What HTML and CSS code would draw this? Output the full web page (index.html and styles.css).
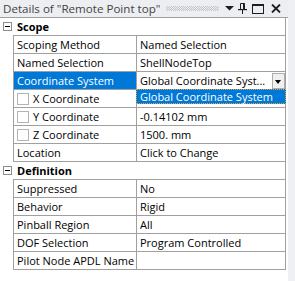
FILE: index.html
```html
<!DOCTYPE html>
<html lang="en">
<head>
    <meta charset="UTF-8">
    <meta name="viewport" content="width=device-width, initial-scale=1.0">
    <title>Details of "Remote Point top"</title>
    <link rel="stylesheet" href="styles.css">
</head>
<body>
<div class="window">
    <div class="pane">
        <!-- Title bar -->
        <div class="title-bar">
            <span class="title">Details of "Remote Point top"</span>
            <span class="grip"></span>
            <svg class="ico ico-menu" width="9" height="5" viewBox="0 0 9 5"><polygon points="0,0 9,0 4.5,4.5" fill="#1e1e1e"/></svg>
            <svg class="ico ico-pin" width="9" height="11" viewBox="0 0 9 11">
                <path d="M2.5 0.5h4v6h-4z" fill="none" stroke="#1e1e1e"/>
                <rect x="5" y="0.5" width="1.5" height="6" fill="#1e1e1e"/>
                <rect x="0" y="6" width="9" height="1.2" fill="#1e1e1e"/>
                <rect x="4" y="7" width="1" height="4" fill="#1e1e1e"/>
            </svg>
            <svg class="ico ico-max" width="12" height="10" viewBox="0 0 12 10">
                <rect x="0.5" y="0.5" width="11" height="9" fill="none" stroke="#1e1e1e"/>
                <rect x="0" y="0" width="12" height="2" fill="#1e1e1e"/>
            </svg>
            <svg class="ico ico-close" width="10" height="9" viewBox="0 0 10 9">
                <path d="M1 0.5l8 8M9 0.5l-8 8" stroke="#1e1e1e" stroke-width="1.8"/>
            </svg>
        </div>

        <!-- Property grid -->
        <div class="props">
            <div class="row section">
                <span class="gutter"><span class="toggle"></span></span>
                <div class="cells"><span class="head">Scope</span></div>
            </div>
            <div class="row">
                <span class="gutter"></span>
                <div class="cells"><span class="name">Scoping Method</span><span class="value">Named Selection</span></div>
            </div>
            <div class="row">
                <span class="gutter"></span>
                <div class="cells"><span class="name">Named Selection</span><span class="value">ShellNodeTop</span></div>
            </div>
            <div class="row selected">
                <span class="gutter"></span>
                <div class="cells">
                    <span class="name">Coordinate System</span>
                    <span class="value combo">
                        <span class="combo-text">Global Coordinate Syst...</span>
                        <span class="combo-btn"></span>
                    </span>
                </div>
            </div>
            <div class="row">
                <span class="gutter"></span>
                <div class="cells"><span class="name"><span class="check"></span>X Coordinate</span><span class="value"></span></div>
            </div>
            <div class="row">
                <span class="gutter"></span>
                <div class="cells"><span class="name"><span class="check"></span>Y Coordinate</span><span class="value">-0.14102 mm</span></div>
            </div>
            <div class="row">
                <span class="gutter"></span>
                <div class="cells"><span class="name"><span class="check"></span>Z Coordinate</span><span class="value">1500. mm</span></div>
            </div>
            <div class="row">
                <span class="gutter"></span>
                <div class="cells"><span class="name">Location</span><span class="value">Click to Change</span></div>
            </div>
            <div class="row section">
                <span class="gutter"><span class="toggle"></span></span>
                <div class="cells"><span class="head">Definition</span></div>
            </div>
            <div class="row">
                <span class="gutter"></span>
                <div class="cells"><span class="name">Suppressed</span><span class="value">No</span></div>
            </div>
            <div class="row">
                <span class="gutter"></span>
                <div class="cells"><span class="name">Behavior</span><span class="value">Rigid</span></div>
            </div>
            <div class="row">
                <span class="gutter"></span>
                <div class="cells"><span class="name">Pinball Region</span><span class="value">All</span></div>
            </div>
            <div class="row">
                <span class="gutter"></span>
                <div class="cells"><span class="name">DOF Selection</span><span class="value">Program Controlled</span></div>
            </div>
            <div class="row">
                <span class="gutter"></span>
                <div class="cells"><span class="name">Pilot Node APDL Name</span><span class="value"></span></div>
            </div>

            <!-- open dropdown of the combo -->
            <div class="drop-list">Global Coordinate System</div>
        </div>
    </div>
    <div class="edge"></div>
</div>
</body>
</html>
```

FILE: styles.css
```css
body {
    margin: 0;
    font-family: "Open Sans", "Noto Sans", sans-serif;
    font-size: 11px;
    color: #000;
    background-color: #eceef2;
}

.window {
    display: flex;
    height: 281px;
}

.pane {
    width: 288px;
    background-color: #fff;
}

.edge {
    flex: 1;
    background-color: #eef0f3;
}

/* Title bar */
.title-bar {
    height: 17px;
    display: flex;
    align-items: center;
    padding-left: 3px;
    background-color: #eceef2;
    color: #444;
}

.title {
    font-size: 11.6px;
    white-space: nowrap;
    line-height: 17px;
}

.grip {
    flex: 1;
    height: 5px;
    margin: 0 6px 0 6px;
    background-image: conic-gradient(#c2c4cc 25%, transparent 0 50%, #c2c4cc 0 75%, transparent 0);
    background-size: 2px 2px;
}

.ico {
    display: block;
    flex: none;
}
.ico-pin { margin-left: 4px; }
.ico-max { margin-left: 5px; }
.ico-close { margin-left: 7px; margin-right: 7px; }

/* Property grid */
.props {
    position: relative;
    border-top: 1px solid #a0a0a0;
}

.row {
    display: flex;
    height: 18px;
}

.gutter {
    width: 13px;
    flex: none;
}

.toggle {
    display: block;
    position: relative;
    width: 9px;
    height: 9px;
    margin: 4px 0 0 3px;
    box-sizing: border-box;
    border: 1px solid #8c8c8c;
}
.toggle::after {
    content: "";
    position: absolute;
    left: 1px;
    top: 3px;
    width: 5px;
    height: 1px;
    background-color: #000;
}

.cells {
    width: 273px;
    height: 18px;
    display: flex;
    box-sizing: border-box;
    border: 1px solid #a0a0a0;
    border-top: 0;
}

.section .cells {
    border-left: 0;
}

.head {
    padding-left: 4px;
    line-height: 17px;
    font-weight: bold;
}

.name,
.value {
    display: flex;
    align-items: center;
    height: 17px;
    padding-left: 3px;
    white-space: nowrap;
    overflow: hidden;
}

.name {
    width: 123px;
    flex: none;
    box-sizing: border-box;
    border-right: 1px solid #a0a0a0;
}

.value {
    flex: 1;
}

.selected .name {
    background-color: #0078d7;
    color: #fff;
}

.check {
    width: 12px;
    height: 12px;
    margin-right: 4px;
    box-sizing: border-box;
    border: 1px solid #b4b4b4;
    background-color: #fff;
}

/* Combo box */
.combo-text {
    flex: 1;
}

.combo-btn {
    position: relative;
    width: 13px;
    height: 16px;
    margin-top: 1px;
    box-sizing: border-box;
    border: 1px solid #adadad;
    background-color: #f0f0f0;
}
.combo-btn::after {
    content: "";
    position: absolute;
    left: 2px;
    top: 6px;
    border-left: 3.5px solid transparent;
    border-right: 3.5px solid transparent;
    border-top: 4px solid #000;
}

.drop-list {
    position: absolute;
    left: 136px;
    top: 71px;
    width: 150px;
    height: 15px;
    box-sizing: border-box;
    padding-left: 3px;
    border: 1px dotted #e9a23b;
    background-color: #0078d7;
    color: #fff;
    line-height: 13px;
    white-space: nowrap;
}
```
